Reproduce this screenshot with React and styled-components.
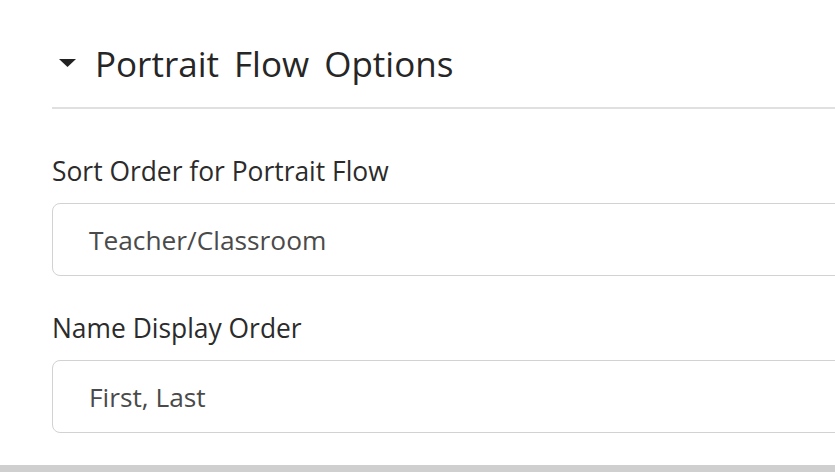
import React from "react";
import styled, { createGlobalStyle } from "styled-components";

const Global = createGlobalStyle`
  html, body { margin: 0; padding: 0; background: #fff; overflow: hidden; }
  body { font-family: "Open Sans", "Noto Sans", sans-serif; }
`;

const Panel = styled.div`
  box-sizing: border-box;
  height: 472px;
  border-bottom: 7px solid #cfcfcf;
  padding-left: 52px;
  overflow: hidden;
`;

const Header = styled.div`
  display: flex;
  align-items: flex-start;
  height: 109px;
  padding: 46px 0 0 7px;
  gap: 19px;
  box-sizing: border-box;
  border-bottom: 2px solid #e0e0e0;
`;

const Caret = styled.svg`
  width: 17px;
  height: 8px;
  margin-top: 13px;
  flex: none;
`;

const Title = styled.h1`
  margin: 0;
  font-size: 35px;
  font-weight: 400;
  color: #262626;
  word-spacing: 6px;
  line-height: 1;
`;

const Field = styled.div`
  display: flex;
  flex-direction: column;
`;

const Label = styled.label`
  font-size: 26.4px;
  color: #2b2b2b;
  line-height: 26px;
  margin-top: ${(p) => p.$top}px;
  margin-bottom: 19px;
`;

const Box = styled.div`
  box-sizing: border-box;
  height: 73px;
  width: 900px;
  border: 1.5px solid #d2d2d2;
  border-radius: 8px;
  display: flex;
  align-items: center;
  padding-left: 36px;
  font-size: 26.3px;
  color: #4a4a4a;
`;

export default function App() {
  return (
    <>
      <Global />
      <Panel>
        <Header>
          <Caret viewBox="0 0 17 8">
            <polygon points="0,0 17,0 8.5,8" fill="#222" />
          </Caret>
          <Title>Portrait Flow Options</Title>
        </Header>
        <Field>
          <Label $top={49}>Sort Order for Portrait Flow</Label>
          <Box>Teacher/Classroom</Box>
        </Field>
        <Field>
          <Label $top={39}>Name Display Order</Label>
          <Box>First, Last</Box>
        </Field>
      </Panel>
    </>
  );
}
